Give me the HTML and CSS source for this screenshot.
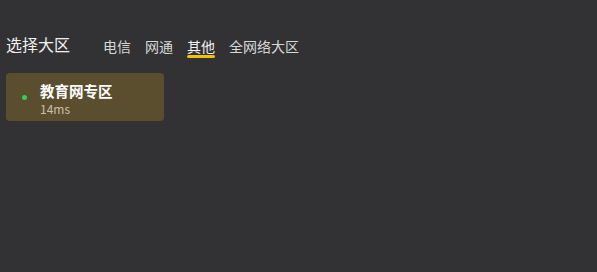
FILE: index.html
```html
<!DOCTYPE html>
<html lang="zh-cn">
<head>
    <meta charset="UTF-8">
    <title>选择大区</title>
    <link rel="stylesheet" href="styles.css">
</head>
<body>
    <div class="panel">
        <div class="head">
            <h1>选择大区</h1>
            <div class="tabs">
                <span class="tab">电信</span>
                <span class="tab">网通</span>
                <span class="tab active">其他</span>
                <span class="tab">全网络大区</span>
            </div>
        </div>
        <div class="servers">
            <div class="server">
                <span class="dot"></span>
                <div class="info">
                    <div class="name">教育网专区</div>
                    <div class="ping">14ms</div>
                </div>
            </div>
        </div>
    </div>
</body>
</html>
```

FILE: styles.css
```css
body {
    margin: 0;
    background-color: #323234;
    font-family: "Noto Sans CJK SC", "Noto Sans", sans-serif;
    color: #e6e6e6;
}
.panel {
    padding: 32px 6px 0 6px;
}
.head {
    display: flex;
    align-items: center;
    height: 24px;
}
.head h1 {
    margin: 0;
    font-size: 16px;
    font-weight: normal;
    color: #f0f0f0;
    width: 97px;
}
.tabs {
    display: flex;
    gap: 14px;
    margin-top: 3px;
}
.tab {
    font-size: 14px;
    color: #d8d8d8;
    position: relative;
    line-height: 18px;
}
.tab.active {
    color: #f0f0f0;
}
.tab.active::after {
    content: "";
    position: absolute;
    left: 0;
    right: 0;
    bottom: -3px;
    height: 3px;
    border-radius: 2px;
    background-color: #f2c200;
}
.servers {
    margin-top: 17px;
    display: flex;
}
.server {
    width: 158px;
    height: 48px;
    box-sizing: border-box;
    background-color: #5b4e2e;
    border-radius: 4px;
    display: flex;
    align-items: center;
    padding-left: 16px;
}
.dot {
    width: 5px;
    height: 5px;
    border-radius: 50%;
    background-color: #2ed158;
    margin-top: 1px;
    margin-right: 13px;
}
.info {
    padding-top: 2px;
}
.name {
    font-size: 14.5px;
    font-weight: bold;
    color: #ffffff;
    line-height: 21px;
}
.ping {
    font-size: 12px;
    color: #c8c0a8;
    line-height: 16px;
}
```
